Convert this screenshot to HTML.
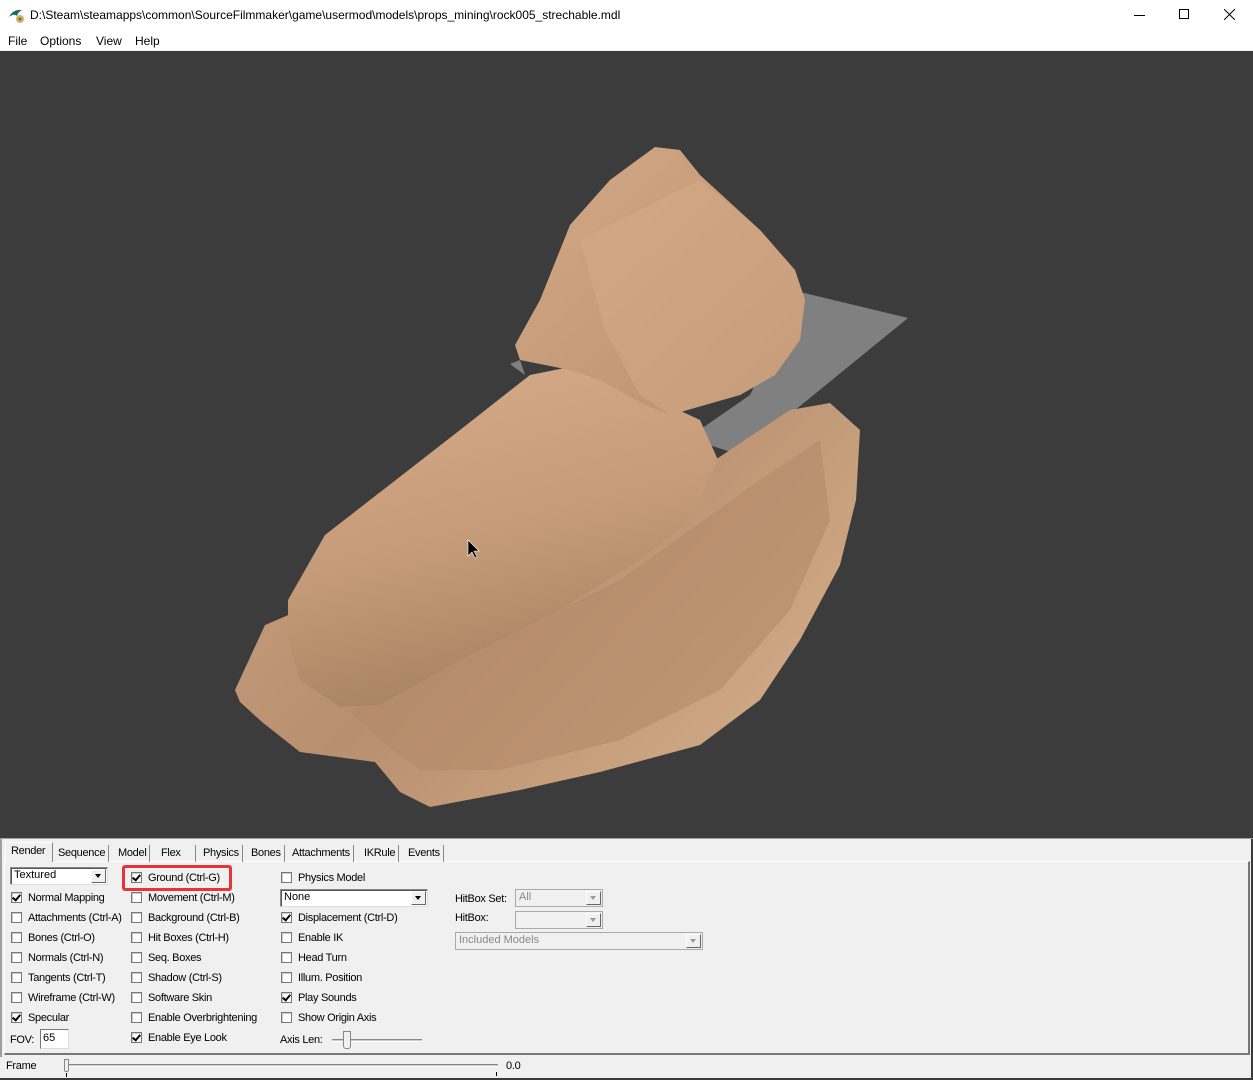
<!DOCTYPE html>
<html><head><meta charset="utf-8"><style>
*{margin:0;padding:0;box-sizing:border-box}
body{width:1253px;height:1080px;overflow:hidden;background:#f0f0f0;font-family:"Liberation Sans",sans-serif;position:relative}
.a{position:absolute;white-space:nowrap}
.t{font-size:11px;color:#000;letter-spacing:-0.3px}
.cb{position:absolute;width:11px;height:11px;border:1px solid #777;background:#fff;box-shadow:inset 1px 1px 0 #ccc}
.cb.c::after{content:"";position:absolute;left:2px;top:0px;width:3px;height:6px;border:solid #000;border-width:0 2px 2px 0;transform:rotate(40deg)}
.tab{position:absolute;top:845px;height:17px;font-size:11px;border-right:1px solid #888;padding:0 3px;line-height:17px;letter-spacing:-0.3px}
.combo{position:absolute;height:18px;border:1px solid #888;border-right-color:#ddd;border-bottom-color:#ddd;background:#fff;font-size:11px;line-height:15px;padding-left:3px;box-shadow:inset 1px 1px 0 #555}
.combo .b{position:absolute;right:1px;top:1px;width:15px;height:14px;background:#f0f0f0;border:1px solid #fff;border-right-color:#666;border-bottom-color:#666}
.combo .b::after{content:"";position:absolute;left:3px;top:4px;border:3.5px solid transparent;border-top:4px solid #000}
.dis{background:#f0f0f0;color:#888;box-shadow:none;border-color:#aaa}
.dis .b::after{border-top-color:#999}
</style></head><body>
<div class="a" style="left:0;top:0;width:1253px;height:30px;background:#fff"></div>
<svg class="a" style="left:8px;top:7px" width="18" height="18" viewBox="0 0 18 18"><path d="M1 10 Q5 2 14 3 Q10 5 9 9 Q6 6 1 10Z" fill="#1e6b6b"/><circle cx="12" cy="12" r="4" fill="#c8b46a"/><circle cx="12" cy="12" r="1.5" fill="#7a6a30"/></svg>
<div class="a" style="left:30px;top:8px;font-size:12px;color:#000">D:\Steam\steamapps\common\SourceFilmmaker\game\usermod\models\props_mining\rock005_strechable.mdl</div>
<div class="a" style="left:1134px;top:15px;width:11px;height:1px;background:#000"></div>
<div class="a" style="left:1179px;top:9px;width:10px;height:10px;border:1px solid #000"></div>
<svg class="a" style="left:1224px;top:9px" width="11" height="11"><path d="M0 0L11 11M11 0L0 11" stroke="#000" stroke-width="1"/></svg>
<div class="a" style="left:0;top:30px;width:1253px;height:20px;background:#fff"></div>
<div class="a" style="left:8px;top:34px;font-size:12px">File</div>
<div class="a" style="left:40px;top:34px;font-size:12px">Options</div>
<div class="a" style="left:96px;top:34px;font-size:12px">View</div>
<div class="a" style="left:135px;top:34px;font-size:12px">Help</div>
<div class="a" style="left:0;top:51px;width:1253px;height:787px;background:#3c3c3c"></div>
<svg class="a" style="left:0;top:51px" width="1253" height="787" viewBox="0 51 1253 787">
<defs>
<linearGradient id="g1" x1="0" y1="0" x2="1" y2="1"><stop offset="0" stop-color="#d2a988"/><stop offset=".5" stop-color="#c79c7a"/><stop offset="1" stop-color="#b88f6c"/></linearGradient>
<linearGradient id="g2" x1="0" y1="0" x2="0.3" y2="1"><stop offset="0" stop-color="#d6ac8a"/><stop offset=".6" stop-color="#c49a78"/><stop offset="1" stop-color="#a88462"/></linearGradient>
<linearGradient id="g3" x1="0" y1="0" x2="1" y2="0.6"><stop offset="0" stop-color="#c9a07e"/><stop offset=".5" stop-color="#b89070"/><stop offset="1" stop-color="#d0a985"/></linearGradient>
</defs>
<polygon points="510,364 520,360 525,375" fill="#808080"/>
<polygon points="800,292 908,318 740,455 688,438 750,395" fill="#808080"/>
<path d="M235,690 L265,625 L300,610 L700,470 L790,410 L830,403 L860,430 L856,500 L840,565 L800,640 L760,700 L700,745 L600,772 L520,790 L430,807 L400,792 L375,762 L300,752 L262,722 L240,702 Z" fill="url(#g3)"/>
<path d="M350,712 L460,660 L620,580 L760,480 L820,440 L830,520 L790,610 L720,690 L620,740 L500,770 L420,770 L380,740 Z" fill="#b48b69" opacity=".6"/>
<path d="M288,600 L325,535 L460,430 L530,375 L575,366 L625,385 L700,420 L718,460 L690,520 L640,560 L560,610 L460,660 L380,705 L340,707 L300,680 L288,640 Z" fill="url(#g2)"/>
<path d="M515,345 L540,300 L570,225 L610,180 L655,147 L680,150 L700,175 L760,230 L795,270 L805,300 L800,340 L775,375 L740,395 L670,415 L645,405 L600,380 L570,370 L520,360 Z" fill="url(#g1)"/>
<path d="M580,240 L700,180 L760,230 L795,270 L805,300 L800,340 L775,375 L740,395 L670,415 L640,395 L605,330 Z" fill="#d6ad8c" opacity=".45"/>
<path d="M468,540 l0,16 l4,-4 l3,6 l2,-1 l-3,-6 l5,0 Z" fill="#000" stroke="#fff" stroke-width=".6"/>
</svg>
<div class="a" style="left:0;top:838px;width:1253px;height:1px;background:#a0a0a0"></div>
<div class="a" style="left:0;top:839px;width:2px;height:218px;background:#a0a0a0"></div>
<div class="a" style="left:1251px;top:839px;width:2px;height:241px;background:#3a3a3a"></div>
<div class="a" style="left:4px;top:861px;width:1246px;height:194px;border:1px solid #fff;border-right:2px solid #777;border-bottom:2px solid #777"></div>
<div class="a" style="left:5px;top:842px;width:48px;height:20px;border:1px solid #fff;border-bottom:none;border-right:1px solid #888;background:#f0f0f0"></div>
<div class="a t" style="left:11px;top:845px">Render</div>
<div class="tab" style="left:55px">Sequence</div>
<div class="tab" style="left:115px">Model</div>
<div class="tab" style="left:158px;width:38px">Flex</div>
<div class="tab" style="left:200px">Physics</div>
<div class="tab" style="left:248px">Bones</div>
<div class="tab" style="left:289px">Attachments</div>
<div class="tab" style="left:361px">IKRule</div>
<div class="tab" style="left:405px">Events</div>
<div class="combo" style="left:10px;top:867px;width:98px">Textured<div class="b"></div></div>
<div class="a" style="left:122px;top:865px;width:110px;height:26px;border:3px solid #e8333a;border-radius:3px"></div>
<div class="combo" style="left:280px;top:889px;width:148px">None<div class="b"></div></div>
<div class="cb c" style="left:11px;top:892px"></div><div class="a t" style="left:28px;top:892px">Normal Mapping</div>
<div class="cb" style="left:11px;top:912px"></div><div class="a t" style="left:28px;top:912px">Attachments (Ctrl-A)</div>
<div class="cb" style="left:11px;top:932px"></div><div class="a t" style="left:28px;top:932px">Bones (Ctrl-O)</div>
<div class="cb" style="left:11px;top:952px"></div><div class="a t" style="left:28px;top:952px">Normals (Ctrl-N)</div>
<div class="cb" style="left:11px;top:972px"></div><div class="a t" style="left:28px;top:972px">Tangents (Ctrl-T)</div>
<div class="cb" style="left:11px;top:992px"></div><div class="a t" style="left:28px;top:992px">Wireframe (Ctrl-W)</div>
<div class="cb c" style="left:11px;top:1012px"></div><div class="a t" style="left:28px;top:1012px">Specular</div>
<div class="a t" style="left:10px;top:1034px">FOV:</div>
<div class="a" style="left:40px;top:1029px;width:29px;height:20px;border:1px solid #777;border-right-color:#ddd;border-bottom-color:#ddd;background:#fff;font-size:11px;padding:2px 0 0 2px">65</div>
<div class="cb c" style="left:131px;top:872px"></div><div class="a t" style="left:148px;top:872px">Ground (Ctrl-G)</div>
<div class="cb" style="left:131px;top:892px"></div><div class="a t" style="left:148px;top:892px">Movement (Ctrl-M)</div>
<div class="cb" style="left:131px;top:912px"></div><div class="a t" style="left:148px;top:912px">Background (Ctrl-B)</div>
<div class="cb" style="left:131px;top:932px"></div><div class="a t" style="left:148px;top:932px">Hit Boxes (Ctrl-H)</div>
<div class="cb" style="left:131px;top:952px"></div><div class="a t" style="left:148px;top:952px">Seq. Boxes</div>
<div class="cb" style="left:131px;top:972px"></div><div class="a t" style="left:148px;top:972px">Shadow (Ctrl-S)</div>
<div class="cb" style="left:131px;top:992px"></div><div class="a t" style="left:148px;top:992px">Software Skin</div>
<div class="cb" style="left:131px;top:1012px"></div><div class="a t" style="left:148px;top:1012px">Enable Overbrightening</div>
<div class="cb c" style="left:131px;top:1032px"></div><div class="a t" style="left:148px;top:1032px">Enable Eye Look</div>
<div class="cb" style="left:281px;top:872px"></div><div class="a t" style="left:298px;top:872px">Physics Model</div>
<div class="cb c" style="left:281px;top:912px"></div><div class="a t" style="left:298px;top:912px">Displacement (Ctrl-D)</div>
<div class="cb" style="left:281px;top:932px"></div><div class="a t" style="left:298px;top:932px">Enable IK</div>
<div class="cb" style="left:281px;top:952px"></div><div class="a t" style="left:298px;top:952px">Head Turn</div>
<div class="cb" style="left:281px;top:972px"></div><div class="a t" style="left:298px;top:972px">Illum. Position</div>
<div class="cb c" style="left:281px;top:992px"></div><div class="a t" style="left:298px;top:992px">Play Sounds</div>
<div class="cb" style="left:281px;top:1012px"></div><div class="a t" style="left:298px;top:1012px">Show Origin Axis</div>
<div class="a t" style="left:280px;top:1034px">Axis Len:</div>
<div class="a" style="left:332px;top:1039px;width:90px;height:3px;border-top:1px solid #888;border-bottom:1px solid #fff;background:#ccc"></div>
<div class="a" style="left:343px;top:1031px;width:8px;height:18px;background:#f0f0f0;border:1px solid #888;border-radius:0 0 3px 3px"></div>
<div class="a t" style="left:455px;top:893px">HitBox Set:</div>
<div class="combo dis" style="left:515px;top:889px;width:88px">All<div class="b"></div></div>
<div class="a t" style="left:455px;top:912px">HitBox:</div>
<div class="combo dis" style="left:515px;top:911px;width:88px"><div class="b"></div></div>
<div class="combo dis" style="left:455px;top:932px;width:248px">Included Models<div class="b"></div></div>
<div class="a t" style="left:6px;top:1060px">Frame</div>
<div class="a" style="left:64px;top:1064px;width:434px;height:3px;border-top:1px solid #888;border-bottom:1px solid #fff;background:#ccc"></div>
<div class="a" style="left:64px;top:1059px;width:5px;height:13px;background:#f0f0f0;border:1px solid #888;border-radius:0 0 2px 2px"></div>
<div class="a" style="left:496px;top:1072px;width:1px;height:4px;background:#000"></div>
<div class="a" style="left:66px;top:1073px;width:1px;height:4px;background:#000"></div>
<div class="a t" style="left:506px;top:1060px">0.0</div>
<div class="a" style="left:0;top:1078px;width:1253px;height:2px;background:#3a3a3a"></div>
</body></html>
